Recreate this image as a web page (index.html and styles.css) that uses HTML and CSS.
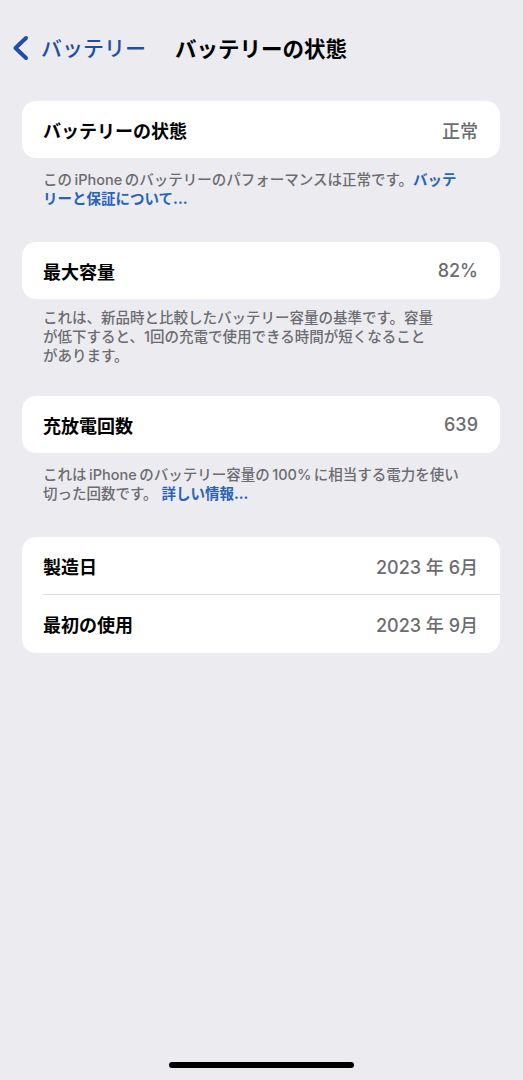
FILE: index.html
```html
<!DOCTYPE html>
<html lang="ja">
<head>
    <meta charset="UTF-8">
    <meta name="viewport" content="width=device-width, initial-scale=1.0">
    <title>バッテリーの状態</title>
    <link rel="stylesheet" href="styles.css">
</head>
<body>
    <!-- Navigation bar -->
    <header class="nav">
        <a class="back" href="#">
            <svg class="chevron" width="18" height="26" viewBox="0 0 18 26">
                <path d="M15 3 L4.5 13 L15 23" fill="none" stroke="currentColor" stroke-width="4" stroke-linecap="round" stroke-linejoin="round"/>
            </svg>
            <span>バッテリー</span>
        </a>
        <h1 class="title">バッテリーの状態</h1>
    </header>

    <main class="page">
        <section class="group">
            <div class="card">
                <div class="row"><span class="label">バッテリーの状態</span><span class="value">正常</span></div>
            </div>
            <p class="note">この&thinsp;iPhone&thinsp;のバッテリーのパフォーマンスは正常です。<a href="#">バッテ<br>リーと保証について...</a></p>
        </section>

        <section class="group group-long">
            <div class="card">
                <div class="row"><span class="label">最大容量</span><span class="value">82%</span></div>
            </div>
            <p class="note">これは、新品時と比較したバッテリー容量の基準です。容量<br>が低下すると、1回の充電で使用できる時間が短くなること<br>があります。</p>
        </section>

        <section class="group">
            <div class="card">
                <div class="row"><span class="label">充放電回数</span><span class="value">639</span></div>
            </div>
            <p class="note">これは&thinsp;iPhone&thinsp;のバッテリー容量の&thinsp;100%&thinsp;に相当する電力を使い<br>切った回数です。 <a href="#">詳しい情報...</a></p>
        </section>

        <section class="group">
            <div class="card">
                <div class="row"><span class="label">製造日</span><span class="value">2023 年 6月</span></div>
                <div class="row"><span class="label">最初の使用</span><span class="value">2023 年 9月</span></div>
            </div>
        </section>
    </main>

    <div class="home-bar"></div>
</body>
</html>
```

FILE: styles.css
```css
body {
    margin: 0;
    min-height: 1080px;
    background: #ebebf0;
    font-family: "Inter", "Noto Sans CJK JP", sans-serif;
    color: #000;
}

.nav {
    height: 94px;
    display: flex;
    align-items: center;
    padding-left: 11px;
    box-sizing: border-box;
}

.back {
    display: flex;
    align-items: center;
    gap: 12px;
    color: #1f4ea6;
    text-decoration: none;
    font-size: 21px;
    font-weight: 500;
}

.chevron {
    margin-top: 1px;
}

.title {
    margin: 0 0 0 29px;
    font-size: 21.5px;
    font-weight: 700;
}

.page {
    padding: 7px 23px 0 22px;
}

.group {
    margin-bottom: 34px;
}

.card {
    background: #fff;
    border-radius: 14px;
    overflow: hidden;
}

.row {
    height: 57px;
    display: flex;
    align-items: center;
    justify-content: space-between;
    padding: 0 22px 0 21px;
    font-size: 18px;
    position: relative;
}

.row + .row {
    height: 59px;
}

/* inset hairline between rows */
.row + .row::before {
    content: "";
    position: absolute;
    top: 0;
    left: 21px;
    right: 0;
    height: 1px;
    background: #dcdce0;
}

.label {
    font-weight: 700;
}

.value {
    color: #6c6c70;
    font-weight: 500;
}

.note {
    margin: 0;
    padding: 12px 21px 0;
    font-size: 14.5px;
    line-height: 19px;
    color: #6c6c70;
    font-weight: 500;
}

.group-long {
    margin-bottom: 31px;
}

.group-long .note {
    padding-top: 9px;
}

.note a {
    color: #2a63ba;
    text-decoration: none;
    font-weight: 700;
}

.home-bar {
    position: fixed;
    left: 169px;
    bottom: 12px;
    width: 185px;
    height: 6px;
    border-radius: 3px;
    background: #000;
}
```
